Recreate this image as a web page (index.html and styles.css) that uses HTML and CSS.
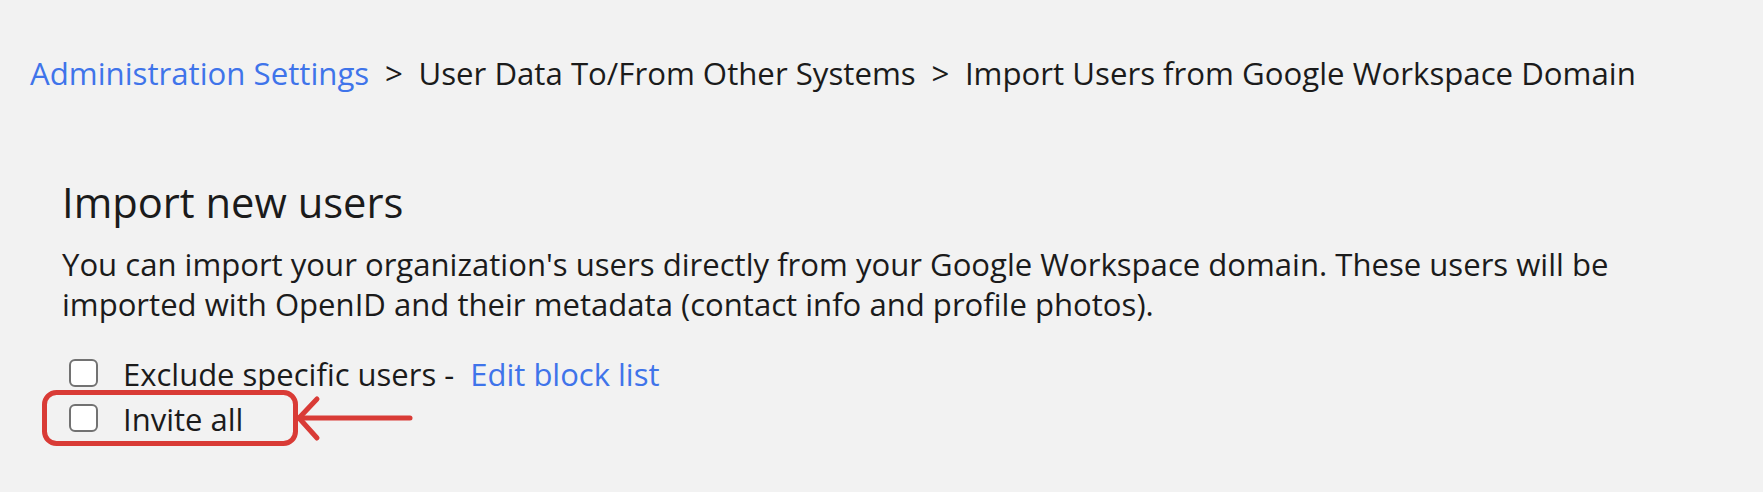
FILE: index.html
```html
<!DOCTYPE html>
<html>
<head>
<meta charset="utf-8">
<link rel="stylesheet" href="styles.css">
</head>
<body>
<div class="page">
  <nav class="crumbs">
    <a class="link" href="#">Administration Settings</a>
    <span class="sep">&gt;</span>
    <span>User Data To/From Other Systems</span>
    <span class="sep">&gt;</span>
    <span>Import Users from Google Workspace Domain</span>
  </nav>
  <section class="panel">
    <h1 class="title">Import new users</h1>
    <p class="desc">You can import your organization's users directly from your Google Workspace domain. These users will be imported with OpenID and their metadata (contact info and profile photos).</p>
    <div class="options">
      <label class="opt"><span class="box"></span><span class="lbl">Exclude specific users - <a class="link edit" href="#">Edit block list</a></span></label>
      <label class="opt"><span class="box"></span><span class="lbl">Invite all</span></label>
      <svg class="annot" width="380" height="60" viewBox="0 0 380 60">
        <rect x="2.5" y="2.5" width="251" height="51" rx="12" ry="12" fill="none" stroke="#d93b36" stroke-width="5"/>
        <path d="M257 28 H368" stroke="#d93b36" stroke-width="5" stroke-linecap="round" fill="none"/>
        <path d="M275 9 L257 28 L275 48" stroke="#d93b36" stroke-width="5" stroke-linecap="round" stroke-linejoin="round" fill="none"/>
      </svg>
    </div>
  </section>
</div>
</body>
</html>
```
FILE: styles.css
```css
html, body {
  margin: 0;
  padding: 0;
  background: #f2f2f2;
}
body {
  font-family: "Open Sans", "Noto Sans", sans-serif;
  color: #1b1b1b;
  width: 1763px;
  height: 492px;
  overflow: hidden;
}
.page {
  padding: 51px 0 0 30px;
}
.crumbs {
  font-size: 31.2px;
  line-height: 44px;
  display: flex;
  white-space: nowrap;
}
.crumbs .sep {
  margin: 0 15.7px;
}
.link {
  color: #3f74ea;
  text-decoration: none;
}
.panel {
  padding: 81px 0 0 32px;
}
.title {
  margin: 0;
  font-size: 41.7px;
  line-height: 52px;
  font-weight: 400;
}
.desc {
  margin: 16px 0 0 0;
  font-size: 31.1px;
  line-height: 40px;
  width: 1590px;
}
.options {
  position: relative;
  margin-top: 28px;
}
.opt {
  display: flex;
  align-items: center;
  font-size: 31px;
  line-height: 45px;
  height: 45px;
}
.box {
  box-sizing: border-box;
  width: 29px;
  height: 28px;
  border: 2.5px solid #727272;
  border-radius: 6px;
  background: #fff;
  margin: 0 25px 0 7px;
  position: relative;
  top: -2px;
}
.edit {
  margin-left: 8px;
}
.annot {
  position: absolute;
  left: -20px;
  top: 38px;
}
```
